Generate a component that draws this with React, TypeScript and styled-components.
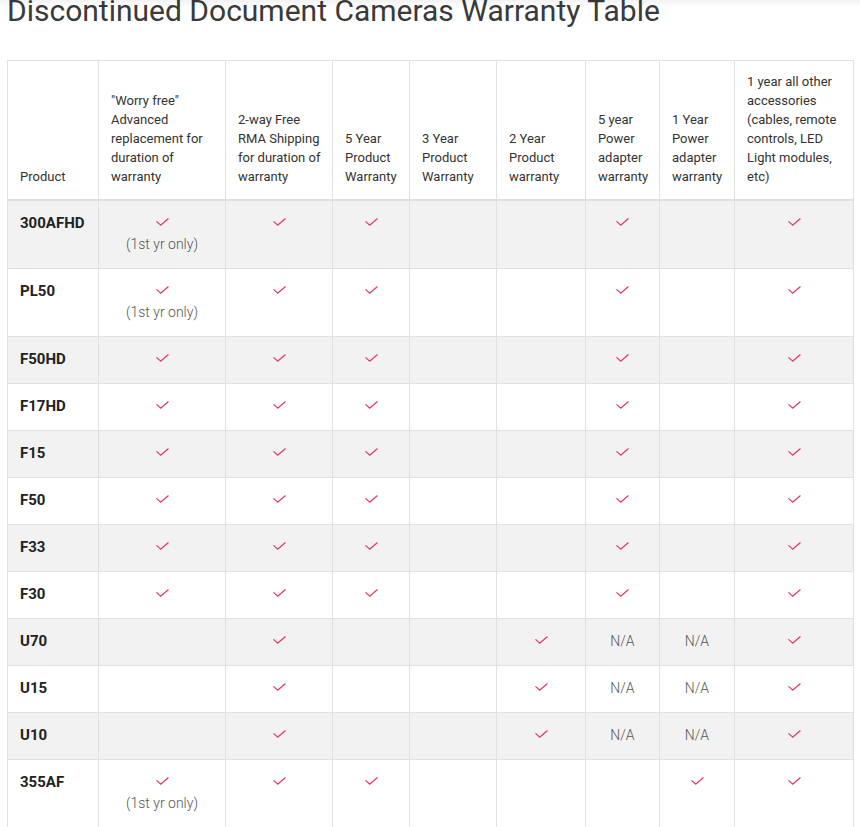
import styled, { createGlobalStyle } from "styled-components";

type Cell = "check" | "first" | "na" | "";

interface Row {
  product: string;
  cells: Cell[];
}

const headers = [
  "Product",
  "\"Worry free\" Advanced replacement for duration of warranty",
  "2-way Free RMA Shipping for duration of warranty",
  "5 Year Product Warranty",
  "3 Year Product Warranty",
  "2 Year Product warranty",
  "5 year Power adapter warranty",
  "1 Year Power adapter warranty",
  "1 year all other accessories (cables, remote controls, LED Light modules, etc)",
];

const colWidths = [91, 127, 107, 77, 87, 89, 74, 75, 119];

const classic: Cell[] = ["check", "check", "check", "", "", "check", "", "check"];
const firstYear: Cell[] = ["first", "check", "check", "", "", "check", "", "check"];
const uSeries: Cell[] = ["", "check", "", "", "check", "na", "na", "check"];

const rows: Row[] = [
  { product: "300AFHD", cells: firstYear },
  { product: "PL50", cells: firstYear },
  { product: "F50HD", cells: classic },
  { product: "F17HD", cells: classic },
  { product: "F15", cells: classic },
  { product: "F50", cells: classic },
  { product: "F33", cells: classic },
  { product: "F30", cells: classic },
  { product: "U70", cells: uSeries },
  { product: "U15", cells: uSeries },
  { product: "U10", cells: uSeries },
  { product: "355AF", cells: ["first", "check", "check", "", "", "", "check", "check"] },
];

const CheckMark = () => (
  <CheckLine>
    <svg width="13" height="8" viewBox="0 0 13 8" fill="none">
      <polyline
        points="0.8,3.6 4.6,7.2 12.2,0.8"
        stroke="#e8335f"
        strokeWidth="1.15"
        strokeLinecap="round"
        strokeLinejoin="round"
      />
    </svg>
  </CheckLine>
);

const renderCell = (cell: Cell) => {
  if (cell === "check") return <CheckMark />;
  if (cell === "first")
    return (
      <>
        <CheckMark />
        <Note>(1st yr only)</Note>
      </>
    );
  if (cell === "na") return <Note>N/A</Note>;
  return null;
};

const App = () => {
  return (
    <>
      <GlobalStyle />
      <TopShade />
      <Page>
        <Title>Discontinued Document Cameras Warranty Table</Title>
        <Table>
          <colgroup>
            {colWidths.map((w, i) => (
              <col key={i} style={{ width: w }} />
            ))}
          </colgroup>
          <thead>
            <tr>
              {headers.map((h) => (
                <HeadCell key={h}>{h}</HeadCell>
              ))}
            </tr>
          </thead>
          <tbody>
            {rows.map((row, i) => (
              <BodyRow key={row.product} $striped={i % 2 === 0}>
                <ProductCell>{row.product}</ProductCell>
                {row.cells.map((cell, j) => (
                  <ValueCell key={j}>{renderCell(cell)}</ValueCell>
                ))}
              </BodyRow>
            ))}
          </tbody>
        </Table>
      </Page>
    </>
  );
};

export default App;

const GlobalStyle = createGlobalStyle`
  html, body {
    margin: 0;
    padding: 0;
    background: #ffffff;
  }
  body {
    font-family: Roboto, "Liberation Sans", Arial, sans-serif;
    color: #333333;
    overflow: hidden;
  }
`;

const TopShade = styled.div`
  position: fixed;
  top: 0;
  left: 0;
  right: 0;
  height: 7px;
  background: linear-gradient(rgba(0, 0, 0, 0.05), rgba(0, 0, 0, 0));
  pointer-events: none;
  z-index: 2;
`;

const Page = styled.div`
  padding: 0 7px;
`;

const Title = styled.h1`
  margin: -6px 0 32px 0;
  font-size: 30px;
  line-height: 34px;
  font-weight: 400;
  color: #3a3a3a;
  white-space: nowrap;
`;

const Table = styled.table`
  width: 846px;
  table-layout: fixed;
  border-collapse: collapse;
  font-size: 14px;
`;

const HeadCell = styled.th`
  border: 1px solid #e0e0e5;
  border-bottom: 2px solid #dfdfe4;
  padding: 11px 8px 13px 12px;
  text-align: left;
  vertical-align: bottom;
  font-size: 13px;
  font-weight: 400;
  line-height: 19px;
  color: #333333;
`;

const BodyRow = styled.tr<{ $striped: boolean }>`
  background: ${({ $striped }) => ($striped ? "#f2f2f2" : "#ffffff")};
`;

const ProductCell = styled.td`
  border: 1px solid #e0e0e5;
  padding: 12px 12px 13px 12px;
  vertical-align: top;
  line-height: 21px;
  font-size: 15px;
  font-weight: 700;
  color: #222222;
`;

const ValueCell = styled.td`
  border: 1px solid #e0e0e5;
  padding: 12px 6px 13px 6px;
  vertical-align: top;
  text-align: center;
  line-height: 21px;
`;

const CheckLine = styled.span`
  display: block;
  height: 21px;
  padding-top: 5px;
  box-sizing: border-box;

  svg {
    display: block;
    margin: 0 auto;
  }
`;

const Note = styled.span`
  display: block;
  font-weight: 300;
  color: #555555;
`;
